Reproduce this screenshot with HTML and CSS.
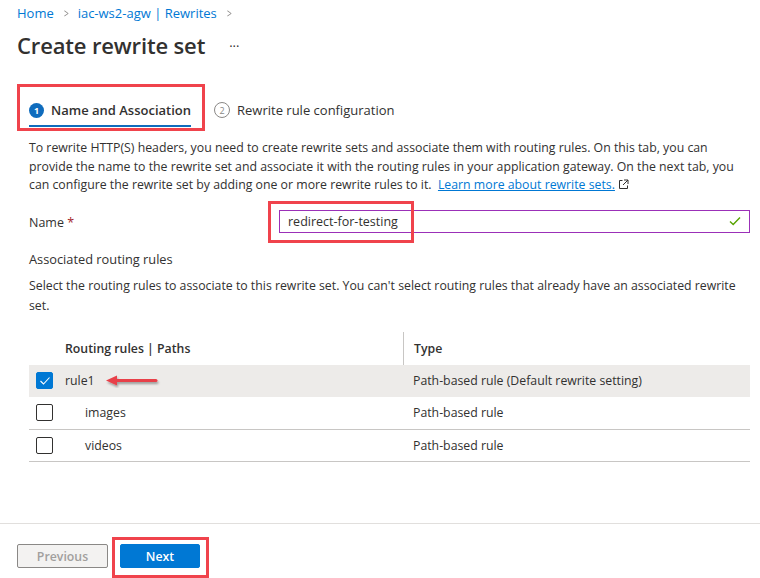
FILE: index.html
```html
<!DOCTYPE html>
<html>
<head>
<meta charset="utf-8">
<link rel="stylesheet" href="styles.css">
</head>
<body>
<div class="page">
  <nav class="breadcrumb">
    <a>Home</a><span class="chev">&gt;</span><a>iac-ws2-agw | Rewrites</a><span class="chev">&gt;</span>
  </nav>
  <div class="title-row">
    <h1 class="title">Create rewrite set</h1>
    <span class="more">···</span>
  </div>

  <div class="tabs">
    <div class="tab active">
      <span class="step filled">1</span><span class="tab-label">Name and Association</span>
    </div>
    <div class="tab">
      <span class="step outline">2</span><span class="tab-label">Rewrite rule configuration</span>
    </div>
    <div class="annot annot-tab"></div>
  </div>

  <div class="content">
    <p class="desc">To rewrite HTTP(S) headers, you need to create rewrite sets and associate them with routing rules. On this tab, you can<br>provide the name to the rewrite set and associate it with the routing rules in your application gateway. On the next tab, you<br>can configure the rewrite set by adding one or more rewrite rules to it. &nbsp;<a class="link">Learn more about rewrite sets.</a><svg class="ext" width="11" height="11" viewBox="0 0 11 11"><path d="M4.5 1.5H1.5v8h8V6.5" fill="none" stroke="#323130" stroke-width="1"/><path d="M6 1h4v4M10 1L5 6" fill="none" stroke="#323130" stroke-width="1"/></svg></p>

    <div class="field">
      <label class="field-label">Name <span class="req">*</span></label>
      <div class="input">
        <span class="input-text">redirect-for-testing</span>
        <svg class="valid" width="12" height="10" viewBox="0 0 12 10"><path d="M1 5.5l3.2 3L11 1.5" fill="none" stroke="#57a300" stroke-width="1.4"/></svg>
        <div class="annot annot-input"></div>
      </div>
    </div>

    <h2 class="section">Associated routing rules</h2>
    <p class="section-desc">Select the routing rules to associate to this rewrite set. You can't select routing rules that already have an associated rewrite<br>set.</p>

    <div class="table">
      <div class="row head">
        <div class="cell check"></div>
        <div class="cell name">Routing rules | Paths</div>
        <div class="cell type">Type</div>
      </div>
      <div class="row selected">
        <div class="cell check"><span class="cb on"><svg width="12" height="10" viewBox="0 0 12 10"><path d="M1.5 5l3 3L10.5 1.5" fill="none" stroke="#fff" stroke-width="1.1"/></svg></span></div>
        <div class="cell name">rule1
          <svg class="arrow" width="56" height="14" viewBox="0 0 56 14"><defs><filter id="sh" x="-10%" y="-50%" width="130%" height="250%"><feDropShadow dx="1" dy="2" stdDeviation="1.2" flood-color="#000" flood-opacity="0.35"/></filter></defs><g filter="url(#sh)"><path d="M10 6.5H51" stroke="#e8414a" stroke-width="3" stroke-linecap="round"/><path d="M1 6.5L12 1.5V11.5Z" fill="#e8414a"/></g></svg>
        </div>
        <div class="cell type">Path-based rule (Default rewrite setting)</div>
      </div>
      <div class="row">
        <div class="cell check"><span class="cb"></span></div>
        <div class="cell name sub">images</div>
        <div class="cell type">Path-based rule</div>
      </div>
      <div class="row last">
        <div class="cell check"><span class="cb"></span></div>
        <div class="cell name sub">videos</div>
        <div class="cell type">Path-based rule</div>
      </div>
    </div>
  </div>
</div>

<footer class="footer">
  <button class="btn prev">Previous</button>
  <div class="next-wrap">
    <button class="btn next">Next</button>
    <div class="annot annot-next"></div>
  </div>
</footer>
</body>
</html>
```

FILE: styles.css
```css
* { box-sizing: border-box; }
html, body { margin: 0; padding: 0; }
body {
  width: 760px;
  height: 578px;
  background: #fff;
  font-family: "Open Sans", "Noto Sans", sans-serif;
  font-size: 12.3px;
  color: #323130;
  position: relative;
  overflow: hidden;
}
.page { padding: 4px 10px 0 17px; }

.breadcrumb {
  display: flex;
  align-items: center;
  height: 18px;
  font-size: 13px;
  color: #0078d4;
}
.breadcrumb .chev {
  color: #8a8886;
  margin: 0 8px 0 9px;
  font-size: 12px;
  transform: scaleX(0.7);
}

.title-row {
  display: flex;
  align-items: center;
  margin-top: 8px;
  height: 30px;
}
.title {
  margin: 0;
  font-size: 22px;
  font-weight: 600;
  letter-spacing: -0.15px;
  color: #323130;
}
.more { margin-left: 24px; font-size: 13px; color: #323130; margin-top: 2px; }

.tabs {
  position: relative;
  display: flex;
  align-items: flex-start;
  margin-top: 39px;
  padding-left: 12px;
  height: 32px;
}
.tab {
  display: flex;
  align-items: center;
  height: 22px;
  font-size: 13px;
  color: #323130;
}
.tab.active { border-bottom: 2px solid #0f6cbd; height: 28px; padding-bottom: 4px; margin-right: 23px; }
.step {
  width: 15px;
  height: 15px;
  border-radius: 50%;
  display: inline-flex;
  align-items: center;
  justify-content: center;
  font-size: 9px;
  margin-right: 7px;
}
.step.filled { background: #0f6cbd; color: #fff; font-weight: 700; }
.step.outline { width: 16px; height: 16px; border: 1px solid #8a8886; color: #8a8886; }
.tab.active .tab-label { font-weight: 600; }

.annot { position: absolute; border: 3px solid #f0434c; pointer-events: none; }
.annot-tab { left: 0; top: -15px; width: 188px; height: 47px; }

.content { padding-left: 12px; width: 733px; }
.desc {
  margin: 8px 0 0;
  line-height: 18.5px;
  white-space: nowrap;
}
.link { color: #0078d4; text-decoration: underline; }
.ext { margin-left: 3px; vertical-align: -1px; }

.field {
  display: flex;
  align-items: center;
  margin-top: 15px;
  height: 23px;
}
.field-label { width: 250px; font-size: 12.5px; padding-top: 2px; }
.req { color: #a4262c; }
.input {
  position: relative;
  flex: 1;
  height: 23px;
  border: 1px solid #9b30b8;
  display: flex;
  align-items: center;
  padding: 0 8px;
}
.input-text { flex: 1; font-size: 12.5px; }
.annot-input { left: -12px; top: -10px; width: 146px; height: 42px; }

.section { margin: 17px 0 0; font-size: 12.8px; font-weight: 400; line-height: 18px; }
.section-desc { margin: 8px 0 0; line-height: 20px; white-space: nowrap; }

.table { margin-top: 16px; }
.row {
  display: flex;
  align-items: center;
  height: 33px;
  border-bottom: 1px solid #c8c6c4;
}
.row.head { border-bottom: none; height: 33px; font-weight: 600; align-items: stretch; }
.row.head .cell { display: flex; align-items: center; }
.row.head .cell.type { border-left: 1px solid #c8c6c4; }
.row.selected { background: #edebe9; border-bottom: none; height: 32px; }
.row.last { height: 32px; }
.cell.check { width: 36px; padding-left: 7px; display: flex; align-items: center; }
.cell.name { width: 338px; display: flex; align-items: center; }
.cell.name.sub { padding-left: 20px; }
.cell.type { flex: 1; padding-left: 10px; }
.cb {
  width: 17px;
  height: 17px;
  border: 1px solid #323130;
  border-radius: 2px;
  display: inline-flex;
  align-items: center;
  justify-content: center;
  background: #fff;
}
.cb.on { background: #0078d4; border-color: #0078d4; }
.arrow { margin-left: 10px; margin-top: 1px; }

.footer {
  position: absolute;
  left: 0;
  right: 0;
  top: 523px;
  bottom: 0;
  border-top: 1px solid #e1dfdd;
  display: flex;
  align-items: flex-start;
  padding: 20px 0 0 17px;
}
.btn {
  height: 24px;
  font-family: inherit;
  font-size: 12.3px;
  font-weight: 600;
  border-radius: 2px;
  padding: 0;
}
.prev {
  width: 91px;
  background: #f3f2f1;
  border: 1px solid #8a8886;
  color: #a19f9d;
}
.next-wrap { position: relative; margin-left: 12px; }
.next {
  width: 80px;
  background: #0078d4;
  border: 1px solid #0078d4;
  color: #fff;
}
.annot-next { left: -8px; top: -7px; width: 97px; height: 41px; }
```
